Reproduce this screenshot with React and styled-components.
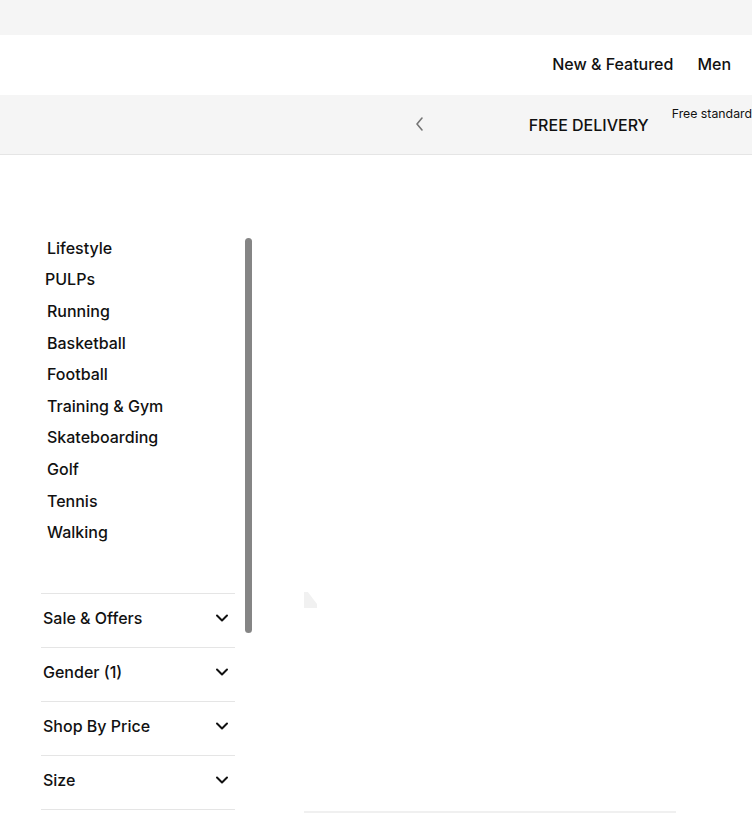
import styled, { createGlobalStyle } from "styled-components";

const GlobalStyle = createGlobalStyle`
  html, body {
    margin: 0;
    padding: 0;
    background: #fff;
    overflow: hidden;
  }
  body {
    font-family: Inter, "Liberation Sans", Arial, sans-serif;
    color: #111;
  }
`;

const Page = styled.div`
  width: 752px;
  height: 814px;
  overflow: hidden;
`;

const TopStrip = styled.div`
  height: 35px;
  background: #f5f5f5;
`;

const NavBar = styled.nav`
  height: 60px;
  display: flex;
  justify-content: flex-end;
  align-items: center;
  gap: 24px;
  padding-right: 21px;
  background: #fff;

  a {
    font-size: 16px;
    font-weight: 500;
    color: #111;
    text-decoration: none;
    margin-top: -2px;
  }
`;

const PromoBar = styled.div`
  height: 59px;
  background: #f5f5f5;
  border-bottom: 1px solid #e5e5e5;
  display: flex;
  align-items: stretch;
  padding-left: 413px;
  overflow: hidden;
  white-space: nowrap;
`;

const PromoArrow = styled.button`
  border: 0;
  background: none;
  padding: 0;
  width: 14px;
  display: flex;
  align-items: center;
  justify-content: center;
  color: #757575;
  margin-top: -1px;
`;

const PromoTitle = styled.span`
  margin-left: 103px;
  align-self: center;
  font-size: 16px;
  font-weight: 500;
  color: #111;
`;

const PromoSub = styled.span`
  margin-left: 23px;
  padding-top: 11px;
  font-size: 12.3px;
  color: #111;
`;

const Main = styled.div`
  display: flex;
  padding-top: 77px;
`;

const Sidebar = styled.aside`
  display: flex;
  margin-left: 41px;
  width: 212px;
  gap: 10px;
`;

const SidebarContent = styled.div`
  width: 194px;
  flex-shrink: 0;
`;

const CategoryList = styled.ul`
  list-style: none;
  margin: 0;
  padding: 0 0 45px 0;
  border-bottom: 1px solid #e5e5e5;
`;

const Category = styled.li`
  height: 31.6px;
  display: flex;
  align-items: center;
  padding-left: ${(p) => (p.$shift ? 4 : 6)}px;
  font-size: 16px;
  font-weight: 500;
`;

const FilterRow = styled.div`
  box-sizing: border-box;
  height: 54px;
  display: flex;
  align-items: center;
  justify-content: space-between;
  padding: 0 6px 4px 2px;
  border-bottom: 1px solid #e5e5e5;
  font-size: 16px;
  font-weight: 500;
`;

const ScrollTrack = styled.div`
  width: 7px;
  padding-top: 6px;
`;

const ScrollThumb = styled.div`
  width: 7px;
  height: 395px;
  border-radius: 4px;
  background: #858585;
`;

const Results = styled.section`
  flex: 1;
  display: flex;
  flex-direction: column;
  padding-left: 51px;
  padding-right: 76px;
`;

const ImagePlaceholder = styled.div`
  margin-top: 360px;
  width: 13px;
  height: 16px;
  background: #f1f1f1;
  clip-path: polygon(0 0, 30% 0, 100% 75%, 100% 100%, 0 100%);
`;

const CardEdge = styled.div`
  margin-top: 203px;
  height: 2px;
  background: #f0f0f0;
`;

const Chevron = () => (
  <svg width="14" height="14" viewBox="0 0 14 14" fill="none">
    <path d="M2 4.5 L7 9.5 L12 4.5" stroke="#111" strokeWidth="2" strokeLinecap="round" strokeLinejoin="round" />
  </svg>
);

const categories = [
  "Lifestyle",
  "PULPs",
  "Running",
  "Basketball",
  "Football",
  "Training & Gym",
  "Skateboarding",
  "Golf",
  "Tennis",
  "Walking",
];

const filters = ["Sale & Offers", "Gender (1)", "Shop By Price", "Size"];

export default function App() {
  return (
    <Page>
      <GlobalStyle />
      <TopStrip />
      <NavBar>
        <a href="#">New &amp; Featured</a>
        <a href="#">Men</a>
      </NavBar>
      <PromoBar>
        <PromoArrow aria-label="Previous">
          <svg width="10" height="16" viewBox="0 0 10 16" fill="none">
            <path d="M8 2 L3 8 L8 14" stroke="currentColor" strokeWidth="1.6" strokeLinecap="round" strokeLinejoin="round" />
          </svg>
        </PromoArrow>
        <PromoTitle>FREE DELIVERY</PromoTitle>
        <PromoSub>Free standard</PromoSub>
      </PromoBar>
      <Main>
        <Sidebar>
          <SidebarContent>
            <CategoryList>
              {categories.map((c) => (
                <Category key={c} $shift={c === "PULPs"}>
                  {c}
                </Category>
              ))}
            </CategoryList>
            {filters.map((f) => (
              <FilterRow key={f}>
                <span>{f}</span>
                <Chevron />
              </FilterRow>
            ))}
          </SidebarContent>
          <ScrollTrack>
            <ScrollThumb />
          </ScrollTrack>
        </Sidebar>
        <Results>
          <ImagePlaceholder />
          <CardEdge />
        </Results>
      </Main>
    </Page>
  );
}
